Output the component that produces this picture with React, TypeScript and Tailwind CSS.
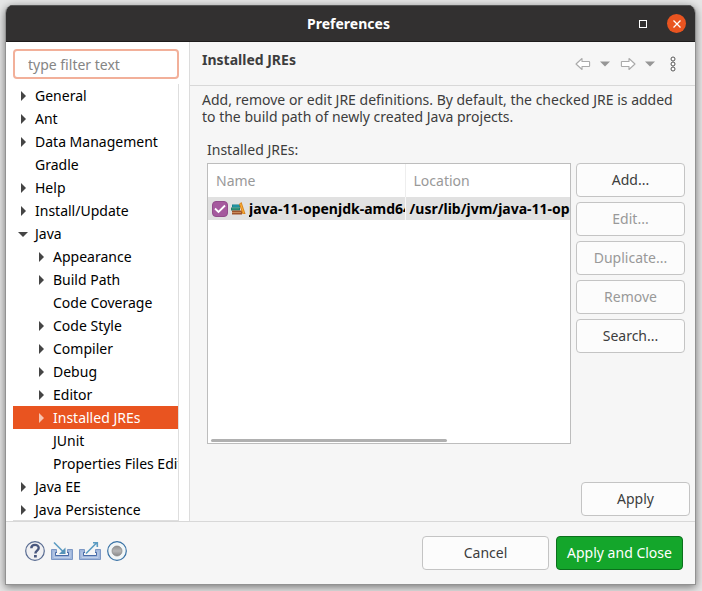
import React, { useState } from "react";

type Node = { label: string; level: 0 | 1; state: "closed" | "open" | "leaf" };

const nodes: Node[] = [
  { label: "General", level: 0, state: "closed" },
  { label: "Ant", level: 0, state: "closed" },
  { label: "Data Management", level: 0, state: "closed" },
  { label: "Gradle", level: 0, state: "leaf" },
  { label: "Help", level: 0, state: "closed" },
  { label: "Install/Update", level: 0, state: "closed" },
  { label: "Java", level: 0, state: "open" },
  { label: "Appearance", level: 1, state: "closed" },
  { label: "Build Path", level: 1, state: "closed" },
  { label: "Code Coverage", level: 1, state: "leaf" },
  { label: "Code Style", level: 1, state: "closed" },
  { label: "Compiler", level: 1, state: "closed" },
  { label: "Debug", level: 1, state: "closed" },
  { label: "Editor", level: 1, state: "closed" },
  { label: "Installed JREs", level: 1, state: "closed" },
  { label: "JUnit", level: 1, state: "leaf" },
  { label: "Properties Files Editor", level: 1, state: "leaf" },
  { label: "Java EE", level: 0, state: "closed" },
  { label: "Java Persistence", level: 0, state: "closed" },
];

const buttonBase = "h-[34px] shrink-0 rounded border border-[#c4c4c4] bg-[#fcfcfc] text-center whitespace-nowrap";

function Arrow({ state }: { state: Node["state"] }) {
  return (
    <svg viewBox="0 0 10 10" className="h-2.5 w-2.5 shrink-0" fill="currentColor" aria-hidden="true">
      {state === "closed" && <path d="M3 0 8 5 3 10Z" />}
      {state === "open" && <path d="M0 3h10L5 8Z" />}
    </svg>
  );
}

function TreeRow({ node, selected, onSelect }: { node: Node; selected: boolean; onSelect: () => void }) {
  return (
    <li>
      <button
        type="button"
        onClick={onSelect}
        className={`flex h-[23px] w-full items-center gap-[7px] whitespace-nowrap ${node.level === 1 ? "pl-[23px]" : "pl-[5px]"} ${
          selected ? "bg-[#e95420] text-white" : "text-black"
        }`}
      >
        <span className={selected ? "text-[#f7c3b0]" : "text-[#454545]"}>
          <Arrow state={node.state} />
        </span>
        {node.label}
      </button>
    </li>
  );
}

function HistoryArrow({ back }: { back?: boolean }) {
  return (
    <svg viewBox="0 0 16 14" className="h-3.5 w-4" fill="#fff" stroke="#aaa" strokeWidth="1.1" strokeLinejoin="round" aria-hidden="true">
      {back ? <path d="M1 7 7 1.5V4.5h7q.6 0 .6.6v3.8q0 .6-.6.6H7v3Z" /> : <path d="M15 7 9 1.5V4.5H2q-.6 0-.6.6v3.8q0 .6.6.6h7v3Z" />}
    </svg>
  );
}

function DropArrow() {
  return (
    <svg viewBox="0 0 10 6" className="h-1.5 w-2.5" fill="#969696" aria-hidden="true">
      <path d="M0 .5h10l-5 5Z" />
    </svg>
  );
}

function Books() {
  return (
    <svg viewBox="0 0 15 14" className="h-3.5 w-[15px] shrink-0" aria-hidden="true">
      <path d="M1 2.5h8v3H1Z" fill="#15808c" />
      <path d="M2 3.5h6v1H2Z" fill="#2aa5b5" />
      <path d="M0 5.5h9v3H0Z" fill="#23806c" />
      <path d="M1 6.3h7v1H1Z" fill="#3d9c80" />
      <path d="M1 8.5h10v4H1Z" fill="#9f542c" />
      <path d="M1 10h9v1H1Z" fill="#c98b5c" />
      <path d="m8 2 2.5-2 4 12h-3Z" fill="#d6811b" />
      <path d="m9 2 1-.7 3.3 10.2h-1Z" fill="#fab03c" />
    </svg>
  );
}

function Transfer({ outward }: { outward?: boolean }) {
  return (
    <svg viewBox="0 0 22 20" className="h-5 w-[22px]" fill="none" aria-hidden="true">
      <path d="M.5 8.5h5v3h-1v3h13v-3h-1v-3h5v10H.5Z" fill="#9fb6dc" stroke="#7d98c5" />
      <path d="M3 10.5v6h16v-6" stroke="#c0cfe8" />
      <path d="M6 11.5H4.5v3h13v-3H16" stroke="#4a6ca8" />
      {outward ? (
        <path d="m7 12.5 11-11m-4 .2h4.3V6" stroke="#5c9cc2" strokeWidth="1.6" />
      ) : (
        <>
          <path d="m3 1.5 10 10" stroke="#5c9cc2" strokeWidth="1.6" />
          <path d="M14.5 6.5v6.5H8Z" fill="#5693b8" />
        </>
      )}
    </svg>
  );
}

export default function App() {
  const [selected, setSelected] = useState("Installed JREs");
  const [checked, setChecked] = useState(true);
  return (
    <div className="flex h-screen min-h-[591px] flex-col bg-[#e6e6e6] pt-[5px] pr-1.5 pb-1.5 pl-[5px] font-['Noto_Sans',sans-serif] text-sm text-[#3d3d3d]">
      <div className="flex min-h-0 flex-1 flex-col overflow-hidden rounded-t-lg border border-t-0 border-[#929292] bg-[#f6f6f6] shadow-[0_2px_8px_#00000080]">
        <header className="grid h-[37px] shrink-0 grid-cols-[1fr_auto_1fr] items-center border-t border-b border-t-[#555] border-b-[#1e1c1c] bg-[#323030] pr-1 text-white">
          <h1 className="col-start-2 font-bold">Preferences</h1>
          <div className="flex items-center justify-end gap-5 pr-[5px]">
            <button type="button" aria-label="Maximize" className="h-2 w-2 border border-white" />
            <button type="button" aria-label="Close" className="flex h-[19px] w-[19px] items-center justify-center rounded-full bg-[#e95420]">
              <svg viewBox="0 0 8 8" className="h-2 w-2" stroke="white" strokeWidth="1.3" aria-hidden="true">
                <path d="m.5.5 7 7m0-7-7 7" />
              </svg>
            </button>
          </div>
        </header>

        <div className="flex min-h-0 flex-1">
          <aside className="flex w-[184px] shrink-0 flex-col border-r border-[#dcdcdc] bg-white pt-[7px] pr-2.5 pl-[7px]">
            <input
              aria-label="type filter text"
              placeholder="type filter text"
              className="h-[30px] w-full shrink-0 rounded border-2 border-[#f2b09a] bg-white px-[13px] placeholder:text-[#858585] focus:outline-none"
            />
            <ul className="mt-[5px] min-h-0 flex-1 overflow-hidden border-r border-b border-[#dedede]">
              {nodes.map((n) => (
                <TreeRow key={n.label} node={n} selected={selected === n.label} onSelect={() => setSelected(n.label)} />
              ))}
            </ul>
          </aside>

          <main className="flex min-w-0 flex-1 flex-col">
            <div className="flex h-11 shrink-0 justify-between border-b border-[#d8d8d8] pr-[19px] pl-3">
              <h2 className="pt-2 font-bold">Installed JREs</h2>
              <div className="flex items-center">
                <button type="button" aria-label="Back"><HistoryArrow back /></button>
                <button type="button" aria-label="Back history" className="ml-[9px]"><DropArrow /></button>
                <button type="button" aria-label="Forward" className="ml-2.5"><HistoryArrow /></button>
                <button type="button" aria-label="Forward history" className="ml-[9px]"><DropArrow /></button>
                <button type="button" aria-label="View menu" className="ml-[15px]">
                  <svg viewBox="0 0 6 16" className="h-4 w-1.5" fill="white" stroke="#555" aria-hidden="true">
                    <circle cx="3" cy="3" r="2" />
                    <circle cx="3" cy="8" r="2" />
                    <circle cx="3" cy="13" r="2" />
                  </svg>
                </button>
              </div>
            </div>

            <p className="mt-[5px] pr-2 pl-3 leading-[17px]">
              Add, remove or edit JRE definitions. By default, the checked JRE is added to the build path of newly created Java projects.
            </p>
            <h3 id="jres" className="mt-[15px] pl-[17px] leading-5">Installed JREs:</h3>

            <div className="mt-[3px] flex min-h-0 flex-1 gap-[5px] pr-2.5 pl-[17px]">
              <div className="flex min-w-0 flex-1 flex-col overflow-hidden border border-[#bdbdbd] bg-white">
                <table aria-labelledby="jres" className="w-full table-fixed border-collapse text-left whitespace-nowrap">
                  <thead>
                    <tr className="h-[33px] text-[#999]">
                      <th className="w-[197px] border-r border-[#eee] pl-2 font-normal">Name</th>
                      <th className="pl-2 font-normal">Location</th>
                    </tr>
                  </thead>
                  <tbody>
                    <tr className="h-[23px] bg-[#e1e1e1] font-bold text-black">
                      <td className="overflow-hidden border-r border-[#f6f6f6] p-0">
                        <label className="flex items-center gap-[3px] overflow-hidden pl-1">
                          <span className="grid h-4 w-4 shrink-0 place-items-center">
                            <input
                              type="checkbox"
                              checked={checked}
                              onChange={(e) => setChecked(e.target.checked)}
                              className="col-start-1 row-start-1 h-4 w-4 appearance-none rounded-sm border border-[#924d8b] bg-white checked:bg-[#a55a9e]"
                            />
                            {checked && (
                              <svg viewBox="0 0 12 10" className="pointer-events-none col-start-1 row-start-1 h-2.5 w-3" fill="none" stroke="white" strokeWidth="1.8" aria-hidden="true">
                                <path d="m1 4.5 3.5 3.5L11 1.5" />
                              </svg>
                            )}
                          </span>
                          <Books />
                          <span className="min-w-0 overflow-hidden">java-11-openjdk-amd64</span>
                        </label>
                      </td>
                      <td className="overflow-hidden p-0 pl-1">/usr/lib/jvm/java-11-openjdk-amd64</td>
                    </tr>
                  </tbody>
                </table>
                <div className="mt-auto mb-px ml-[3px] h-[3px] w-[236px] rounded-full bg-[#b0b0b0]" />
              </div>
              <div className="flex w-[109px] shrink-0 flex-col gap-[5px]">
                <button type="button" className={buttonBase}>Add...</button>
                <button type="button" disabled className={`${buttonBase} text-[#999]`}>Edit...</button>
                <button type="button" disabled className={`${buttonBase} text-[#999]`}>Duplicate...</button>
                <button type="button" disabled className={`${buttonBase} text-[#999]`}>Remove</button>
                <button type="button" className={buttonBase}>Search...</button>
              </div>
            </div>
            <div className="mt-[38px] flex shrink-0 justify-end pr-[5px] pb-[5px]">
              <button type="button" className={`${buttonBase} w-[109px]`}>Apply</button>
            </div>
          </main>
        </div>

        <footer className="flex h-[63px] shrink-0 items-center justify-between border-t border-[#d8d8d8] pr-3 pl-[19px]">
          <div className="flex items-center gap-1.5 pb-1">
            <button type="button" aria-label="Help">
              <svg viewBox="0 0 20 20" className="h-5 w-5" fill="none" aria-hidden="true">
                <circle cx="10" cy="10" r="9.3" fill="#f0f0f2" stroke="#586b91" strokeWidth="1.2" />
                <path d="M6.3 7.2C6.4 2.8 13.7 2.8 13.7 7c0 2.8-3.3 2.5-3.3 5.5" stroke="#49577e" strokeWidth="2.4" />
                <path d="M9 14h2.8v2.5H9Z" fill="#49577e" />
              </svg>
            </button>
            <button type="button" aria-label="Import"><Transfer /></button>
            <button type="button" aria-label="Export"><Transfer outward /></button>
            <button type="button" aria-label="Record">
              <svg viewBox="0 0 20 20" className="h-5 w-5" aria-hidden="true">
                <defs>
                  <linearGradient id="dot" x2="0" y2="1">
                    <stop stopColor="#8f8f8f" />
                    <stop offset=".5" stopColor="#b5b5b5" />
                    <stop offset="1" stopColor="#888" />
                  </linearGradient>
                </defs>
                <circle cx="10" cy="10" r="9.3" fill="#f1f6f7" stroke="#3972a5" strokeWidth="1.2" />
                <circle cx="10" cy="10" r="5" fill="url(#dot)" stroke="#858585" strokeWidth=".7" />
              </svg>
            </button>
          </div>
          <div className="flex gap-[7px]">
            <button type="button" className={`${buttonBase} w-[127px]`}>Cancel</button>
            <button type="button" className="h-[34px] w-[127px] rounded border border-[#0b701c] bg-[#14a62b] whitespace-nowrap text-white">Apply and Close</button>
          </div>
        </footer>
      </div>
    </div>
  );
}
